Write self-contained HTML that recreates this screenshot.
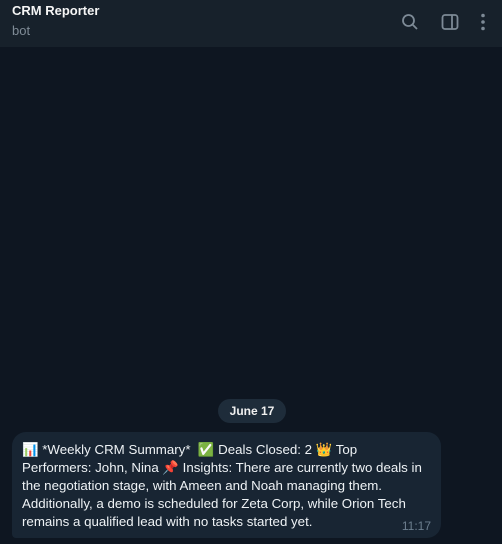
<!DOCTYPE html>
<html><head><meta charset="utf-8"><style>
*{margin:0;padding:0;box-sizing:border-box}
body{width:502px;height:544px;background:#0e1621;font-family:"Liberation Sans","DejaVu Sans",sans-serif;position:relative;overflow:hidden;color:#f5f5f5}
.hdr{position:absolute;left:0;top:0;width:502px;height:47px;background:#17212b}
.t{position:absolute;left:12px;top:3px;font-size:13px;font-weight:bold;color:#f5f5f5}
.s{position:absolute;left:12px;top:23px;font-size:13px;color:#7f8b96}
.date{position:absolute;left:218px;top:399px;width:68px;height:24px;border-radius:12px;background:#1e2c3a;font-size:12px;font-weight:bold;text-align:center;line-height:24px;color:#f0f0f0}
.b{position:absolute;left:12px;top:432px;width:429px;height:106px;background:#182533;border-radius:14px 14px 14px 4px}
.l{position:absolute;left:10px;font-size:13.3px;white-space:nowrap;color:#eef2f5}
.tm{position:absolute;right:10px;bottom:5px;font-size:12px;color:#6d7f8f}
</style></head><body>
<div class="hdr"><div class="t">CRM Reporter</div><div class="s">bot</div>
<svg style="position:absolute;left:400px;top:12px" width="20" height="20" viewBox="0 0 20 20" fill="none" stroke="#7d8a96" stroke-width="1.8"><circle cx="8.5" cy="8.5" r="5.5"/><path d="M12.5 12.5L17 17"/></svg>
<svg style="position:absolute;left:440px;top:12px" width="20" height="20" viewBox="0 0 20 20" fill="none" stroke="#7d8a96" stroke-width="1.8"><rect x="2.5" y="3" width="15" height="14" rx="2.5"/><path d="M12 3v14"/></svg>
<svg style="position:absolute;left:478px;top:12px" width="10" height="20" viewBox="0 0 10 20" fill="#7d8a96"><circle cx="5" cy="3.5" r="1.8"/><circle cx="5" cy="10" r="1.8"/><circle cx="5" cy="16.5" r="1.8"/></svg>
</div>
<div class="date">June 17</div>
<div class="b">
<div class="l" style="top:10px">📊 *Weekly CRM Summary*&nbsp; ✅ Deals Closed: 2 👑 Top</div>
<div class="l" style="top:28px">Performers: John, Nina 📌 Insights: There are currently two deals in</div>
<div class="l" style="top:46px">the negotiation stage, with Ameen and Noah managing them.</div>
<div class="l" style="top:64px">Additionally, a demo is scheduled for Zeta Corp, while Orion Tech</div>
<div class="l" style="top:82px">remains a qualified lead with no tasks started yet.</div>
<div class="tm">11:17</div>
</div>
</body></html>
